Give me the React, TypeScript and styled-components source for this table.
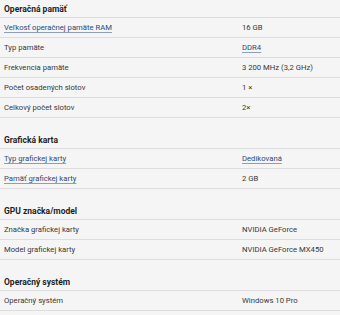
import React from 'react';
import styled, { createGlobalStyle } from 'styled-components';

type Param = {
  label: string;
  value: string;
  labelLink?: boolean;
  valueLink?: boolean;
};

type Section = {
  title: string;
  rows: Param[];
};

const Sections: Section[] = [
  {
    title: 'Operačná pamäť',
    rows: [
      { label: 'Veľkosť operačnej pamäte RAM', value: '16 GB', labelLink: true },
      { label: 'Typ pamäte', value: 'DDR4', valueLink: true },
      { label: 'Frekvencia pamäte', value: '3 200 MHz (3,2 GHz)' },
      { label: 'Počet osadených slotov', value: '1 ×' },
      { label: 'Celkový počet slotov', value: '2×' },
    ],
  },
  {
    title: 'Grafická karta',
    rows: [
      { label: 'Typ grafickej karty', value: 'Dedikovaná', labelLink: true, valueLink: true },
      { label: 'Pamäť grafickej karty', value: '2 GB', labelLink: true },
    ],
  },
  {
    title: 'GPU značka/model',
    rows: [
      { label: 'Značka grafickej karty', value: 'NVIDIA GeForce' },
      { label: 'Model grafickej karty', value: 'NVIDIA GeForce MX450' },
    ],
  },
  {
    title: 'Operačný systém',
    rows: [{ label: 'Operačný systém', value: 'Windows 10 Pro' }],
  },
];

const App = () => {
  return (
    <>
      <GlobalStyle />
      <Page>
        {Sections.map((section, i) => (
          <Block key={i} first={i === 0}>
            <BlockTitle>{section.title}</BlockTitle>
            {section.rows.map((row, j) => (
              <Row key={j}>
                <Cell>{row.labelLink ? <Link>{row.label}</Link> : row.label}</Cell>
                <Cell>{row.valueLink ? <Link>{row.value}</Link> : row.value}</Cell>
              </Row>
            ))}
          </Block>
        ))}
      </Page>
    </>
  );
};

export default App;

const GlobalStyle = createGlobalStyle`
  html, body {
    margin: 0;
    padding: 0;
    background: #f5f5f5;
  }
  body {
    font-family: Roboto, 'Liberation Sans', sans-serif;
    color: #383838;
  }
`;

const Page = styled.div`
  width: 340px;
  height: 315px;
  overflow: hidden;
  background: #f5f5f5;
`;

const Block = styled.section<{ first?: boolean }>`
  margin-top: ${(p) => (p.first ? '0' : '13px')};
`;

const BlockTitle = styled.h3`
  margin: 0;
  height: 17px;
  padding-left: 4px;
  display: flex;
  align-items: center;
  font-size: 8.5px;
  font-weight: 700;
  color: #1f1f1f;
  border-bottom: 1px solid #dedede;
`;

const Row = styled.div`
  display: grid;
  grid-template-columns: 242px 1fr;
  height: 19px;
  align-items: center;
  border-bottom: 1px solid #dedede;
  font-size: 7.7px;
`;

const Cell = styled.div`
  &:first-child {
    padding-left: 4px;
  }
`;

const Link = styled.a`
  color: #2c4a78;
  text-decoration: underline;
  text-decoration-color: #8d9dba;
  text-underline-offset: 2px;
`;
